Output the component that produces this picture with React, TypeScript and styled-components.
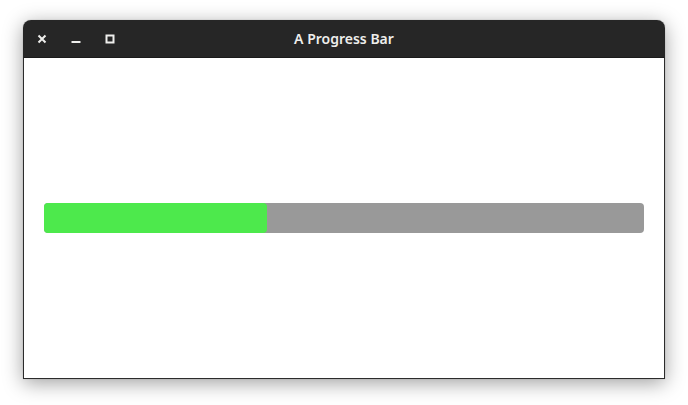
import styled, { createGlobalStyle } from "styled-components"

const GlobalStyle = createGlobalStyle`
html, body {
  margin: 0;
  padding: 0;
  background: #ffffff;
}
body {
  font-family: "Noto Sans", "Open Sans", sans-serif;
}
`

const Page = styled.div`
width: 688px;
height: 405px;
padding: 20px 0 0 23px;
box-sizing: border-box;
`

const Window = styled.div`
width: 642px;
height: 359px;
display: flex;
flex-direction: column;
border-radius: 8px 8px 0 0;
box-shadow: 0 4px 20px rgba(0, 0, 0, 0.38), 0 0 1px rgba(0, 0, 0, 0.4);
overflow: hidden;
`

const TitleBar = styled.div`
height: 37px;
flex: none;
background: #262626;
display: flex;
align-items: center;
position: relative;
padding-left: 14px;
`

const Controls = styled.div`
display: flex;
align-items: center;
gap: 24px;
`

const ControlButton = styled.div`
width: 10px;
height: 10px;
display: flex;
align-items: center;
justify-content: center;
`

const Title = styled.div`
position: absolute;
left: 0;
right: 0;
top: 0;
bottom: 0;
display: flex;
align-items: center;
justify-content: center;
color: #eeeeec;
font-size: 14px;
font-weight: 600;
pointer-events: none;
`

const Body = styled.div`
flex: 1;
background: #ffffff;
border: 1px solid #2b2b2b;
border-top: 1px solid #1a1a1a;
display: flex;
align-items: center;
padding: 0 20px;
`

const Track = styled.div`
flex: 1;
height: 30px;
background: #999999;
border-radius: 4px;
display: flex;
`

const Fill = styled.div`
height: 100%;
background: #4de94c;
border-radius: 4px;
`

const App = () => {
    const progress = 0.372
    return (
        <Page>
            <GlobalStyle />
            <Window>
                <TitleBar>
                    <Controls>
                        <ControlButton>
                            <svg width="10" height="10" viewBox="0 0 10 10">
                                <path d="M1.5 1.5 L8.5 8.5 M8.5 1.5 L1.5 8.5" stroke="#eeeeec" strokeWidth="2" />
                            </svg>
                        </ControlButton>
                        <ControlButton>
                            <svg width="10" height="10" viewBox="0 0 10 10">
                                <rect x="0.5" y="7" width="9" height="2" fill="#eeeeec" />
                            </svg>
                        </ControlButton>
                        <ControlButton>
                            <svg width="10" height="10" viewBox="0 0 10 10">
                                <rect x="1.5" y="1.5" width="7" height="7" fill="none" stroke="#eeeeec" strokeWidth="2" />
                            </svg>
                        </ControlButton>
                    </Controls>
                    <Title>A Progress Bar</Title>
                </TitleBar>
                <Body>
                    <Track>
                        <Fill style={{ width: `${progress * 100}%` }} />
                    </Track>
                </Body>
            </Window>
        </Page>
    )
}

export default App
